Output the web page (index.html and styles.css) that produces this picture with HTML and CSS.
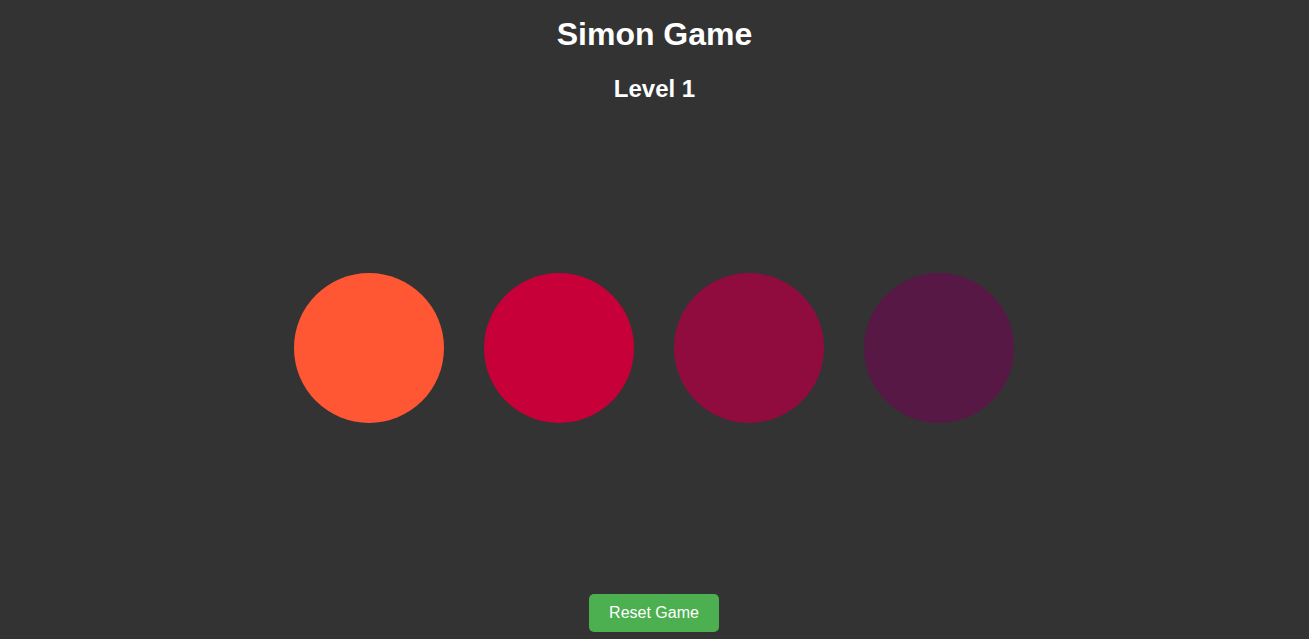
FILE: index.html
```html
<!DOCTYPE html>
<html lang="en">
<head>
<meta charset="utf-8">
<title>Simon Game</title>
<link rel="stylesheet" href="styles.css">
</head>
<body>
<div class="app">
  <h1 class="title">Simon Game</h1>
  <h2 class="level">Level 1</h2>
  <div class="board">
    <div class="pad pad-orange"></div>
    <div class="pad pad-red"></div>
    <div class="pad pad-crimson"></div>
    <div class="pad pad-purple"></div>
  </div>
  <button class="reset">Reset Game</button>
</div>
</body>
</html>
```
FILE: styles.css
```css
html {
  background: #ffffff;
}
body {
  margin: 0;
  font-family: "Liberation Sans", Arial, sans-serif;
  color: #ffffff;
}
.app {
  height: 639px;
  background: #333333;
  display: flex;
  flex-direction: column;
  align-items: center;
}
.title {
  font-size: 32px;
  font-weight: bold;
  margin: 16px 0 0;
}
.level {
  font-size: 24px;
  font-weight: bold;
  margin: 22px 0 0;
}
.board {
  flex: 1;
  display: flex;
  align-items: center;
  justify-content: center;
  gap: 40px;
  margin-right: 1px;
  margin-bottom: 2px;
}
.pad {
  width: 150px;
  height: 150px;
  border-radius: 50%;
}
.pad-orange { background: #FF5733; }
.pad-red { background: #C70039; }
.pad-crimson { background: #900C3F; }
.pad-purple { background: #581845; }
.reset {
  font-family: "Liberation Sans", Arial, sans-serif;
  font-size: 16px;
  color: #ffffff;
  background: #4CAF50;
  border: none;
  border-radius: 5px;
  padding: 10px 20px;
  margin-bottom: 7px;
  margin-right: 1px;
  cursor: pointer;
}
```
